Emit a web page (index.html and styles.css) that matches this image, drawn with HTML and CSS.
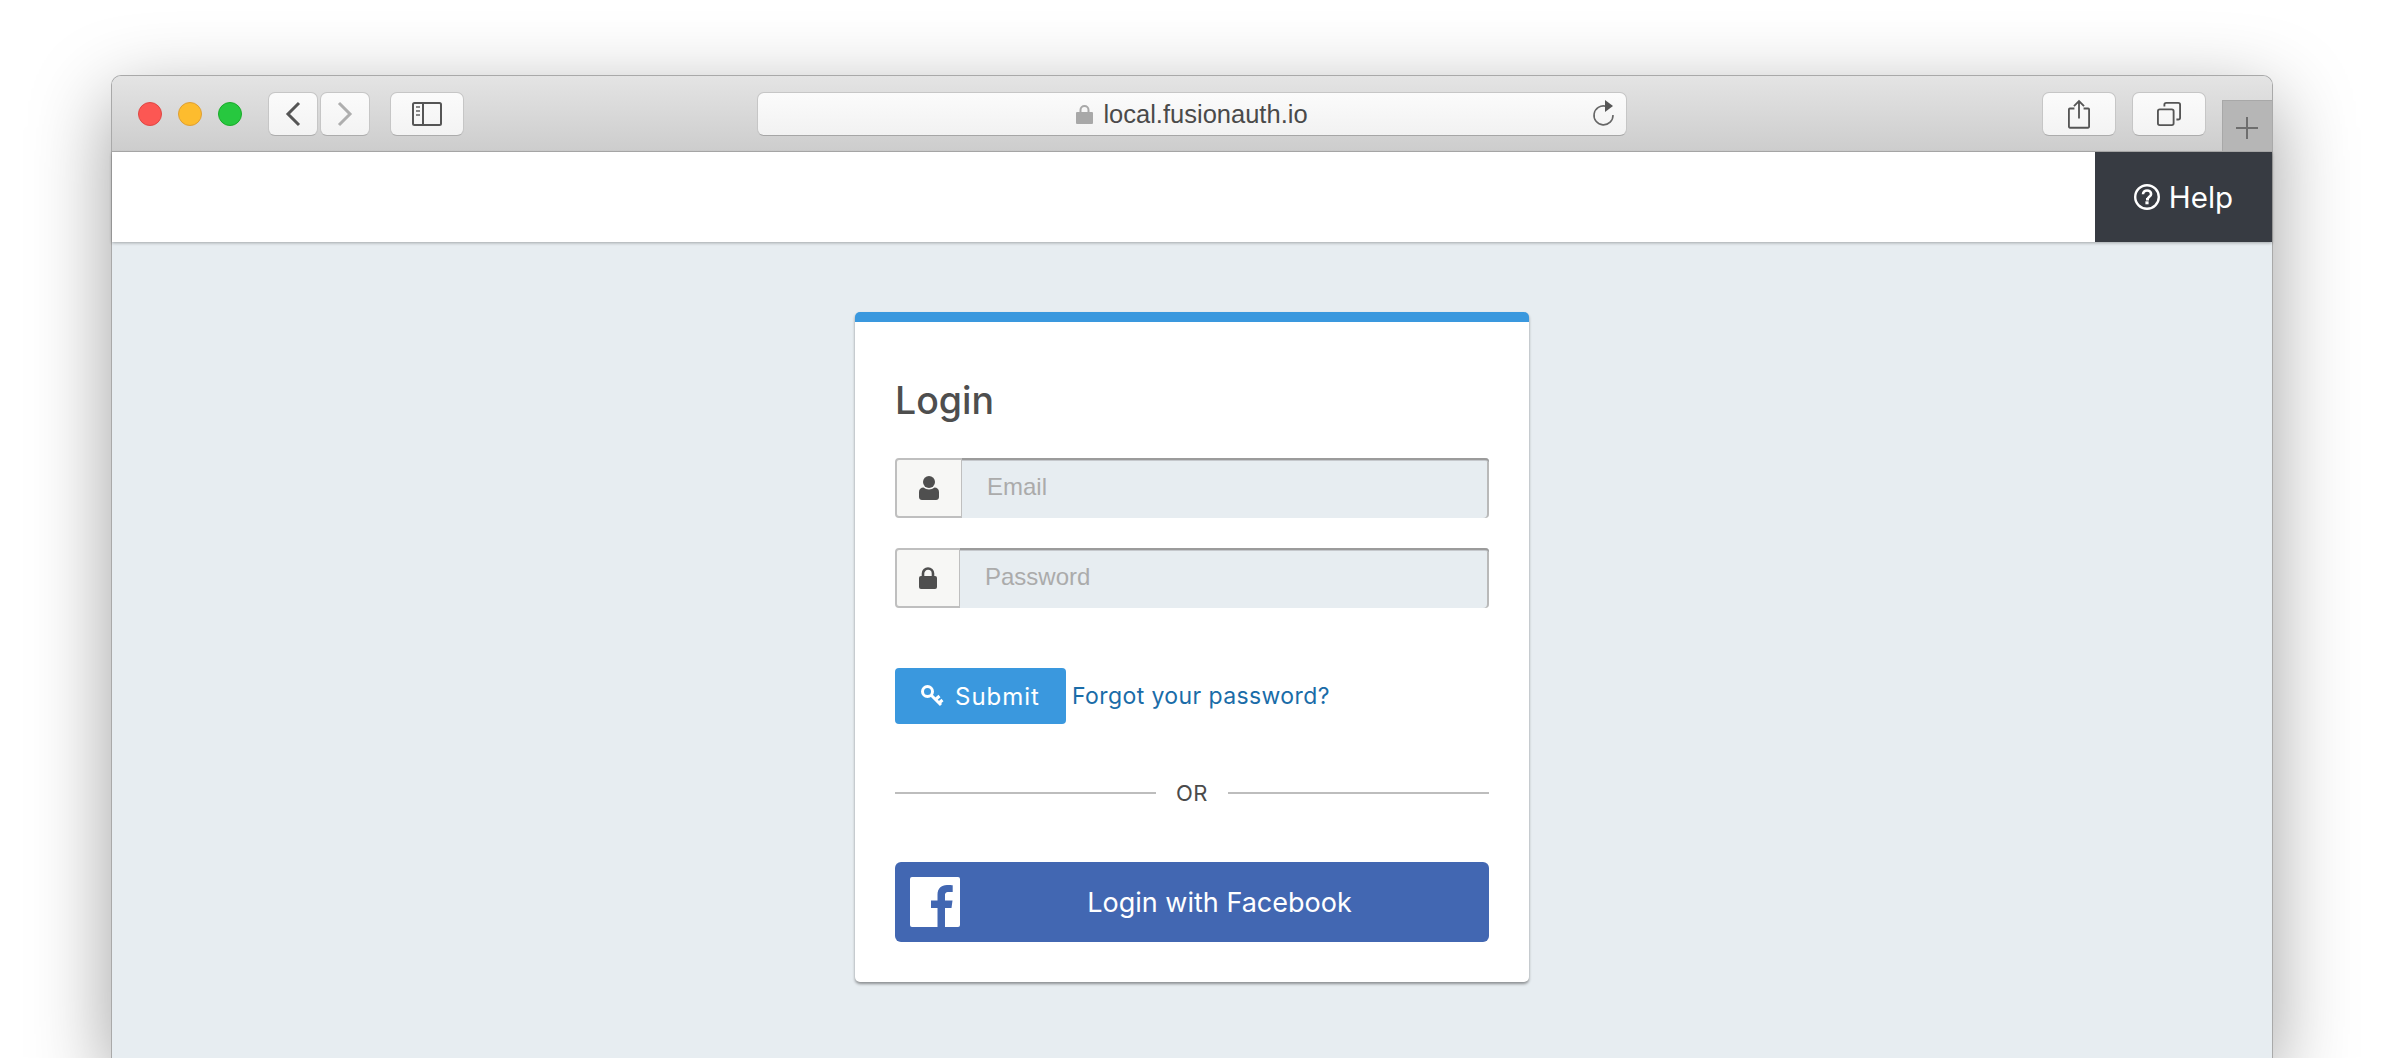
FILE: index.html
```html
<!DOCTYPE html>
<html lang="en">
<head>
    <meta charset="UTF-8">
    <meta name="viewport" content="width=device-width, initial-scale=1.0">
    <title>Login</title>
    <link rel="stylesheet" href="styles.css">
</head>
<body>
    <div class="window">
        <!-- Safari toolbar -->
        <div class="toolbar">
            <span class="light red"></span>
            <span class="light yellow"></span>
            <span class="light green"></span>

            <div class="tool back">
                <svg width="16" height="26" viewBox="0 0 16 26"><path d="M14 2 3 13l11 11" fill="none" stroke="#555" stroke-width="3"/></svg>
            </div>
            <div class="tool forward">
                <svg width="16" height="26" viewBox="0 0 16 26"><path d="M2 2l11 11L2 24" fill="none" stroke="#aeaeae" stroke-width="3"/></svg>
            </div>
            <div class="tool wide sidebar-btn">
                <svg width="30" height="24" viewBox="0 0 30 24">
                    <rect x="1" y="1" width="28" height="22" rx="1.5" fill="none" stroke="#555" stroke-width="2"/>
                    <path d="M11 1v22" stroke="#555" stroke-width="2"/>
                    <path d="M4 5h4M4 9h4M4 13h4" stroke="#888" stroke-width="2"/>
                </svg>
            </div>

            <div class="urlbar">
                <div class="url">
                    <svg width="17" height="20" viewBox="0 0 17 20">
                        <path d="M4.500 9V6a4 4 0 0 1 8 0v3" fill="none" stroke="#a8a8a8" stroke-width="2"/>
                        <rect y="8" width="17" height="12" rx="1" fill="#a8a8a8"/>
                    </svg>
                    <span>local.fusionauth.io</span>
                </div>
                <svg class="reload" width="24" height="28" viewBox="0 0 24 28">
                    <path d="M14 7.200A9.500 9.500 0 1 0 21 16" fill="none" stroke="#666" stroke-width="1.600"/>
                    <path d="M13 1l8 6-8 6z" fill="#555"/>
                </svg>
            </div>

            <div class="tool wide share">
                <svg width="22" height="30" viewBox="0 0 24 32">
                    <path d="M7 10H2a1 1 0 0 0-1 1v19a1 1 0 0 0 1 1h20a1 1 0 0 0 1-1V11a1 1 0 0 0-1-1h-5" fill="none" stroke="#555" stroke-width="2"/>
                    <path d="M12 21V2M6.500 7.500 12 2l5.500 5.500" fill="none" stroke="#555" stroke-width="2"/>
                </svg>
            </div>
            <div class="tool wide">
                <svg width="24" height="24" viewBox="0 0 26 26">
                    <rect x="1" y="8" width="17" height="17" rx="2" fill="none" stroke="#555" stroke-width="2"/>
                    <path d="M8 5V3a2 2 0 0 1 2-2h13a2 2 0 0 1 2 2v14a2 2 0 0 1-2 2h-2" fill="none" stroke="#555" stroke-width="2"/>
                </svg>
            </div>
            <div class="new-tab">
                <svg width="24" height="24" viewBox="0 0 24 24"><path d="M12 1v22M1 12h22" stroke="#6e6e6e" stroke-width="2"/></svg>
            </div>
        </div>

        <!-- Page header -->
        <div class="page-header">
            <a class="help" href="#">
                <svg width="26" height="26" viewBox="0 0 26 26">
                    <circle cx="13" cy="13" r="11.800" fill="none" stroke="#fff" stroke-width="2.400"/>
                    <path d="M9 10.300c0-2.400 1.800-3.800 4.100-3.800 2.300 0 4 1.400 4 3.400 0 2.900-3.400 2.900-3.400 5.300h-1.700" fill="none" stroke="#fff" stroke-width="2.600"/>
                    <rect x="11.400" y="17.300" width="3.200" height="3" fill="#fff"/>
                </svg>
                <span>Help</span>
            </a>
        </div>

        <!-- Page content -->
        <div class="content">
            <div class="card">
                <h1>Login</h1>

                <div class="input-group email-group">
                    <span class="addon">
                        <svg width="20" height="24" viewBox="0 0 20 24">
                            <circle cx="10" cy="6" r="6" fill="#4f4f4f"/>
                            <path d="M0 21v-5c0-3 2-4.500 4.500-4.500 1.500 1.300 3.500 2 5.500 2s4-.7 5.500-2c2.500 0 4.500 1.500 4.500 4.500v5c0 2-1.300 3-3 3H3c-1.700 0-3-1-3-3z" fill="#4f4f4f"/>
                        </svg>
                    </span>
                    <input type="text" placeholder="Email">
                </div>

                <div class="input-group">
                    <span class="addon">
                        <svg width="18" height="22" viewBox="0 0 18 22">
                            <path d="M4 10V6.500a5 5 0 0 1 10 0V10" fill="none" stroke="#4f4f4f" stroke-width="2.600"/>
                            <rect y="9" width="18" height="13" rx="2" fill="#4f4f4f"/>
                        </svg>
                    </span>
                    <input type="password" placeholder="Password">
                </div>

                <div class="actions">
                    <button class="submit">
                        <svg width="23" height="22" viewBox="0 0 23 22">
                            <circle cx="6.500" cy="6.500" r="5" fill="none" stroke="#fff" stroke-width="3"/>
                            <path d="M10 10l10 10M14.500 14.500l4-3.500M18 18l3.500-3" fill="none" stroke="#fff" stroke-width="3"/>
                        </svg>
                        Submit
                    </button>
                    <a class="forgot" href="#">Forgot your password?</a>
                </div>

                <div class="divider"><span>OR</span></div>

                <button class="facebook">
                    <svg width="50" height="50" viewBox="0 0 50 50">
                        <path d="M2 0h46a2 2 0 0 1 2 2v46a2 2 0 0 1-2 2H35V31h6.500l1-7.500H35v-5c0-2.200.6-3.600 3.700-3.600h4V8.200c-.7-.1-3-.3-5.700-.3-5.700 0-9.500 3.400-9.500 9.800v5.800H21V31h6.500v19H2a2 2 0 0 1-2-2V2a2 2 0 0 1 2-2z" fill="#fff"/>
                    </svg>
                    <span>Login with Facebook</span>
                </button>
            </div>
        </div>
    </div>
</body>
</html>
```

FILE: styles.css
```css
/* General reset */
html, body {
    margin: 0;
    height: 1058px;
    overflow: hidden;
}

body {
    padding: 75px 111px 0;
    box-sizing: border-box;
    background-color: #fff;
    font-family: Inter, "Liberation Sans", sans-serif;
}

/* Browser window */
.window {
    height: 983px;
    border: 1px solid #a9a9a9;
    border-bottom: 0;
    border-radius: 10px 10px 0 0;
    background-color: #e7edf1;
    box-shadow: 0 24px 80px rgba(0, 0, 0, 0.38);
}

.toolbar {
    display: flex;
    align-items: flex-start;
    height: 59px;
    padding: 16px 0 0 26px;
    border-bottom: 1px solid #aeaeae;
    border-radius: 9px 9px 0 0;
    background: linear-gradient(#e4e4e4, #cdcdcd);
}

.light {
    width: 22px;
    height: 22px;
    margin: 10px 16px 0 0;
    border: 1px solid;
    border-radius: 50%;
}

.red {
    background-color: #fc5753;
    border-color: #df4744;
}

.yellow {
    background-color: #fdbc2e;
    border-color: #de9f34;
}

.green {
    background-color: #27c83f;
    border-color: #1aab29;
}

.tool {
    display: flex;
    justify-content: center;
    align-items: center;
    box-sizing: border-box;
    width: 50px;
    height: 44px;
    border: 1px solid #c6c6c6;
    border-bottom-color: #acacac;
    border-radius: 7px;
    background: linear-gradient(#fbfbfb, #f3f3f3);
}

.tool.wide {
    width: 74px;
}

.back {
    margin-left: 10px;
}

.forward {
    margin-left: 2px;
}

.sidebar-btn {
    margin-left: 20px;
}

.urlbar {
    position: relative;
    display: flex;
    justify-content: center;
    align-items: center;
    box-sizing: border-box;
    width: 870px;
    height: 44px;
    margin: 0 auto 0 293px;
    border: 1px solid #c6c6c6;
    border-bottom-color: #a6a6a6;
    border-radius: 7px;
    background: linear-gradient(#fbfbfb, #f2f2f2);
}

.url {
    display: flex;
    align-items: center;
    gap: 10px;
    font-family: "Liberation Sans", sans-serif;
    font-size: 25.500px;
    color: #4a4a4a;
}

.reload {
    position: absolute;
    right: 10px;
    top: 6px;
}

.share {
    margin-right: 16px;
}

.new-tab {
    display: flex;
    justify-content: center;
    align-items: center;
    align-self: flex-end;
    box-sizing: border-box;
    width: 50px;
    height: 51px;
    margin-left: 16px;
    padding: 4px 2px 0 0;
    border: solid #a8a8a8;
    border-width: 1px 0 0 1px;
    background-color: #b6b6b6;
}

/* Page header */
.page-header {
    display: flex;
    justify-content: flex-end;
    height: 90px;
    background-color: #fff;
    box-shadow: 0 1px 3px rgba(0, 0, 0, 0.3);
}

.help {
    display: flex;
    align-items: center;
    justify-content: center;
    gap: 9px;
    width: 177px;
    background-color: #373b42;
    color: #fff;
    font-size: 29.500px;
    font-weight: 400;
    text-decoration: none;
}

/* Login card */
.content {
    display: flex;
    justify-content: center;
    padding-top: 70px;
}

.card {
    box-sizing: border-box;
    width: 674px;
    height: 670px;
    padding: 0 40px;
    border-top: 10px solid #3a98de;
    border-radius: 5px;
    background-color: #fff;
    box-shadow: 0 2px 3px rgba(0, 0, 0, 0.4);
}

h1 {
    margin: 56px 0 35px;
    font-size: 37.500px;
    font-weight: 500;
    line-height: 45px;
    color: #4e4e4e;
}

.input-group {
    display: flex;
    height: 60px;
    margin-bottom: 30px;
}

.addon {
    display: flex;
    justify-content: center;
    align-items: center;
    box-sizing: border-box;
    width: 65px;
    border: 2px solid #bfbfbf;
    border-right-width: 1px;
    border-radius: 4px 0 0 4px;
    background-color: #f7f7f5;
}

.email-group .addon {
    width: 67px;
}

input {
    flex: 1;
    min-width: 0;
    padding: 0 25px 2px;
    border: 0;
    border-radius: 0 4px 4px 0;
    outline: 0;
    box-shadow: inset 0 2px 0 #9b9b9b, inset 0 3px 0 #c5c8cc, inset -2px 0 0 #b9b9b9;
    background-color: #e7edf1;
    font-family: "Liberation Sans", sans-serif;
    font-size: 24px;
}

input::placeholder {
    color: #ababab;
    opacity: 1;
}

.actions {
    display: flex;
    align-items: center;
    gap: 6px;
    margin-top: 60px;
}

button {
    border: 0;
    color: #fff;
    font-family: inherit;
    cursor: pointer;
}

.submit {
    display: flex;
    align-items: center;
    justify-content: center;
    gap: 11px;
    width: 171px;
    height: 56px;
    padding: 0;
    border-radius: 4px;
    background-color: #3a98de;
    font-size: 24px;
    letter-spacing: 1px;
}

.forgot {
    color: #1a6ca8;
    font-size: 23px;
    letter-spacing: 0.4px;
    text-decoration: none;
}

.divider {
    display: flex;
    align-items: center;
    gap: 20px;
    margin: 56px 0;
    height: 26px;
    color: #4a4a4a;
    font-size: 22px;
    letter-spacing: 0.5px;
}

.divider::before, .divider::after {
    content: "";
    flex: 1;
    height: 2px;
    background-color: #bdbdbd;
}

.facebook {
    display: flex;
    align-items: center;
    width: 100%;
    height: 80px;
    padding: 0 15px;
    border-radius: 6px;
    background-color: #4267b2;
    font-size: 27px;
}

.facebook span {
    flex: 1;
    padding-left: 5px;
    text-align: center;
}
```
